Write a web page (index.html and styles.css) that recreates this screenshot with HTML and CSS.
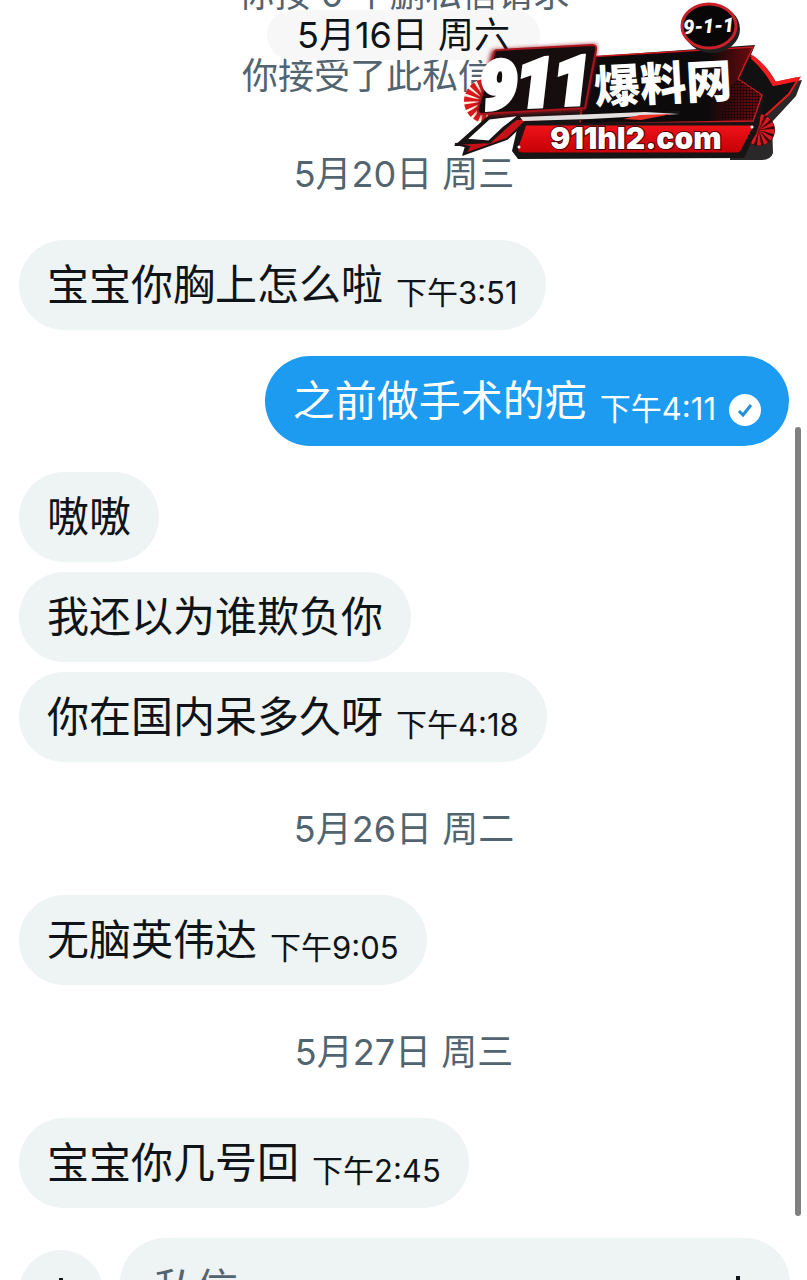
FILE: index.html
```
<!DOCTYPE html>
<html lang="zh-CN">
<head>
  <meta charset="utf-8">
  <meta name="viewport" content="width=device-width, initial-scale=1">
  <title>私信</title>
  <link rel="stylesheet" href="styles.css">
</head>
<body>
  <div class="chat">
    <div class="sticky-date"><span>5月16日 周六</span></div>

    <!-- Brand badge -->
    <svg class="brand" viewBox="0 0 367 170" role="img" aria-label="911爆料网 911hl2.com">
      <defs>
        <linearGradient id="redBar" x1="0" y1="0" x2="0" y2="1">
          <stop offset="0" stop-color="#f11318"/>
          <stop offset="1" stop-color="#c30006"/>
        </linearGradient>
        <linearGradient id="panel" x1="0" y1="0" x2="1" y2="0">
          <stop offset="0.7" stop-color="#0c0a0b"/>
          <stop offset="0.95" stop-color="#6d090d"/>
        </linearGradient>
        <pattern id="mesh" width="3" height="3" patternUnits="userSpaceOnUse">
          <path d="M0 0H3M0 0V3" stroke="#180507" stroke-width="1.4"/>
        </pattern>
        <filter id="glow" x="-10%" y="-20%" width="120%" height="140%">
          <feGaussianBlur stdDeviation="2"/>
        </filter>
      </defs>
      <!-- left fan -->
      <circle cx="46" cy="101" r="14" fill="none" stroke="#fff2dd" stroke-width="16"/>
      <circle cx="46" cy="101" r="14" fill="none" stroke="#db171d" stroke-width="16" stroke-dasharray="3.6 1.8"/>
      <!-- arrow -->
      <path d="M303 51Q325 61 337 84L362 80L356 96L332 122L333 153Q331 160 321 160H290V80Z" fill="#2b2829"/>
      <path d="M303 51Q325 62 335 83L359 78L349 94L325 116L304 112L295 80Z" fill="#111" stroke="#e51a1d" stroke-width="2"/>
      <path d="M312 57Q325 68 334 84L358 79" fill="none" stroke="#f41c1f" stroke-width="4"/>
      <!-- right fan -->
      <circle cx="319" cy="130" r="8" fill="none" stroke="#3b080a" stroke-width="16"/>
      <circle cx="319" cy="130" r="8" fill="none" stroke="#d91a20" stroke-width="15" stroke-dasharray="2.2 1.6"/>
      <!-- main plate -->
      <path d="M145 57L315 45L301 79L325 96L318 128L304 158L78 159L72 151L78 125L22 156L25 146L14 146L49 115Z" fill="#171415"/>
      <path d="M146 57L313 47L298 79L322 95L313 121L140 124Z" fill="url(#panel)" stroke="#c91a1f" stroke-width="1.5"/>
      <path d="M298 79L321 95L313 120L280 120L288 88Z" fill="url(#mesh)"/>
      <!-- ribbons -->
      <path d="M15 144L50 142L75 119L240 112L145 119L85 122L67 139L25 154L29 147Z" fill="#c51219" stroke="#171314" stroke-width="2"/>
      <path d="M25 140L49 118L82 114L64 128L49 142Z" fill="#fff" stroke="#171314" stroke-width="3"/>
      <path d="M80 117L205 112L240 114L150 119L83 121Z" fill="#e5e0e0"/>
      <path d="M183 119L200 115L232 114L201 120Z" fill="#e73026"/>
      <!-- address bar -->
      <path d="M85 124H316L302 151Q300 154 295 154H82Q75 153 77 147Z" fill="url(#redBar)" stroke="#181415" stroke-width="3"/>
      <circle cx="79" cy="147" r="1.5" fill="#fff"/>
      <circle cx="312" cy="127" r="1.5" fill="#fff"/>
      <text class="brand-url" x="110" y="149">911hl2.com</text>
      <!-- number -->
      <path d="M52 50L157 44L155 62L145 110L37 116L38 101Z" fill="#96171f" filter="url(#glow)"/>
      <path d="M55 51Q56 50 60 50L152 45Q157 45 156 50L145 108L41 114Q37 113 38 108Z" fill="#160d0f" stroke="#a8141c" stroke-width="2"/>
      <text class="brand-number" x="41" y="109" transform="rotate(-3 41 109)">911</text>
      <text class="brand-name" x="155" y="104" transform="rotate(-3 155 104)">爆料网</text>
      <!-- round emblem -->
      <ellipse cx="272" cy="29" rx="28" ry="24" fill="#202020"/>
      <ellipse cx="269" cy="26" rx="27" ry="22" fill="#080607" stroke="#c9202a" stroke-width="3"/>
      <text class="brand-small" x="269" y="33" transform="rotate(-3 269 33)">9-1-1</text>
    </svg>

    <main class="log">
      <p class="note">你按 0 个删私信请求</p>
      <p class="note">你接受了此私信请求</p>

      <p class="date">5月20日 周三</p>
      <div class="bubble">宝宝你胸上怎么啦<time>下午3:51</time></div>
      <div class="bubble sent">
        之前做手术的疤<time>下午4:11</time>
        <svg class="check" viewBox="0 0 32 32" aria-label="已发送">
          <circle cx="16" cy="16" r="16" fill="#fff"/>
          <path d="M10 17l4 4 8-10" fill="none" stroke="#1f8fe0" stroke-width="3"/>
        </svg>
      </div>
      <div class="group">
        <div class="bubble">嗷嗷</div>
        <div class="bubble">我还以为谁欺负你</div>
        <div class="bubble">你在国内呆多久呀<time>下午4:18</time></div>
      </div>

      <p class="date">5月26日 周二</p>
      <div class="bubble">无脑英伟达<time>下午9:05</time></div>

      <p class="date">5月27日 周三</p>
      <div class="bubble">宝宝你几号回<time>下午2:45</time></div>
    </main>

    <form class="composer">
      <button class="add" type="button" aria-label="添加">
        <svg viewBox="0 0 32 32"><path d="M16 2v28M2 16h28" stroke="#0f1419" stroke-width="4"/></svg>
      </button>
      <div class="field">
        <input type="text" placeholder="私信" aria-label="私信">
        <button class="voice" type="button" aria-label="语音">
          <svg viewBox="0 0 40 40"><path d="M20 4v32M12 12v16M4 17v6M28 12v16M36 17v6" stroke="#0f1419" stroke-width="4"/></svg>
        </button>
      </div>
    </form>

    <div class="scrollbar"></div>
  </div>
</body>
</html>
```

FILE: styles.css
```
* {
  box-sizing: border-box;
}

body {
  margin: 0;
  background: #fff;
  color: #0f1419;
  font-family: Inter, "Noto Sans CJK SC", sans-serif;
}

.chat {
  position: relative;
  height: 100vh;
  overflow: hidden;
}

.log {
  display: flex;
  flex-direction: column;
  align-items: flex-start;
  gap: 26px;
  margin-top: -34px;
  padding: 0 18px 0 19px;
}

.note,
.date {
  align-self: center;
  margin: 0;
  font-size: 36px;
  line-height: 56px;
  color: #536471;
}

.date {
  margin: 13px 0 12px;
}

.note + .date {
  margin-top: 16px;
}

.bubble {
  display: flex;
  align-items: center;
  height: 90px;
  padding: 0 28px;
  border-radius: 45px;
  background: #eef3f3;
  font-size: 42px;
  line-height: 90px;
  white-space: nowrap;
}

.bubble time {
  margin-left: 13px;
  padding-top: 16px;
  font-size: 31px;
}

.sent {
  align-self: flex-end;
  background: #1d9bf0;
  color: #fff;
}

.check {
  width: 32px;
  height: 32px;
  margin: 18px 0 0 13px;
}

.group {
  display: flex;
  flex-direction: column;
  align-items: flex-start;
  gap: 10px;
}

.sticky-date {
  position: absolute;
  z-index: 1;
  top: 10px;
  left: 0;
  right: 0;
  text-align: center;
}

.sticky-date span {
  display: inline-block;
  padding: 0 30px;
  border-radius: 25px;
  background: #f7f7f7;
  font-size: 36px;
  line-height: 50px;
}

.brand {
  position: absolute;
  z-index: 2;
  top: 0;
  right: 0;
  width: 367px;
  height: 170px;
}

.brand text {
  fill: #fff;
  font-weight: 900;
}

.brand-number {
  font-family: Roboto, sans-serif;
  font-size: 66px;
  font-style: italic;
  stroke: #fff;
  stroke-width: 5px;
}

.brand-name {
  font-family: "Noto Sans CJK SC", sans-serif;
  font-size: 46px;
}

.brand-url {
  font-size: 30px;
  stroke: #4d0003;
  stroke-width: 2px;
  paint-order: stroke;
}

.brand-small {
  font-family: Roboto, sans-serif;
  font-size: 20px;
  font-style: italic;
  text-anchor: middle;
}

.composer {
  display: flex;
  align-items: flex-end;
  gap: 17px;
  margin-top: 30px;
  padding: 0 17px 0 19px;
}

.composer button {
  flex: none;
  border: 0;
  background: none;
}

.composer .add {
  width: 84px;
  height: 84px;
  margin-bottom: -6px;
  padding: 26px;
  border-radius: 50%;
  background: #eef3f3;
}

.field {
  display: flex;
  flex: 1;
  align-items: center;
  min-width: 0;
  height: 90px;
  border-radius: 45px;
  background: #eef3f3;
}

.field input {
  flex: 1;
  min-width: 0;
  padding: 10px 0 0 34px;
  border: 0;
  background: none;
  font: inherit;
  font-size: 42px;
}

.field input::placeholder {
  color: #536471;
}

.field .voice {
  width: 40px;
  height: 40px;
  margin: 18px 32px 0 0;
  padding: 0;
}

.scrollbar {
  position: absolute;
  top: 427px;
  right: 6px;
  bottom: 64px;
  width: 6px;
  border-radius: 3px;
  background: #808080;
}
```
